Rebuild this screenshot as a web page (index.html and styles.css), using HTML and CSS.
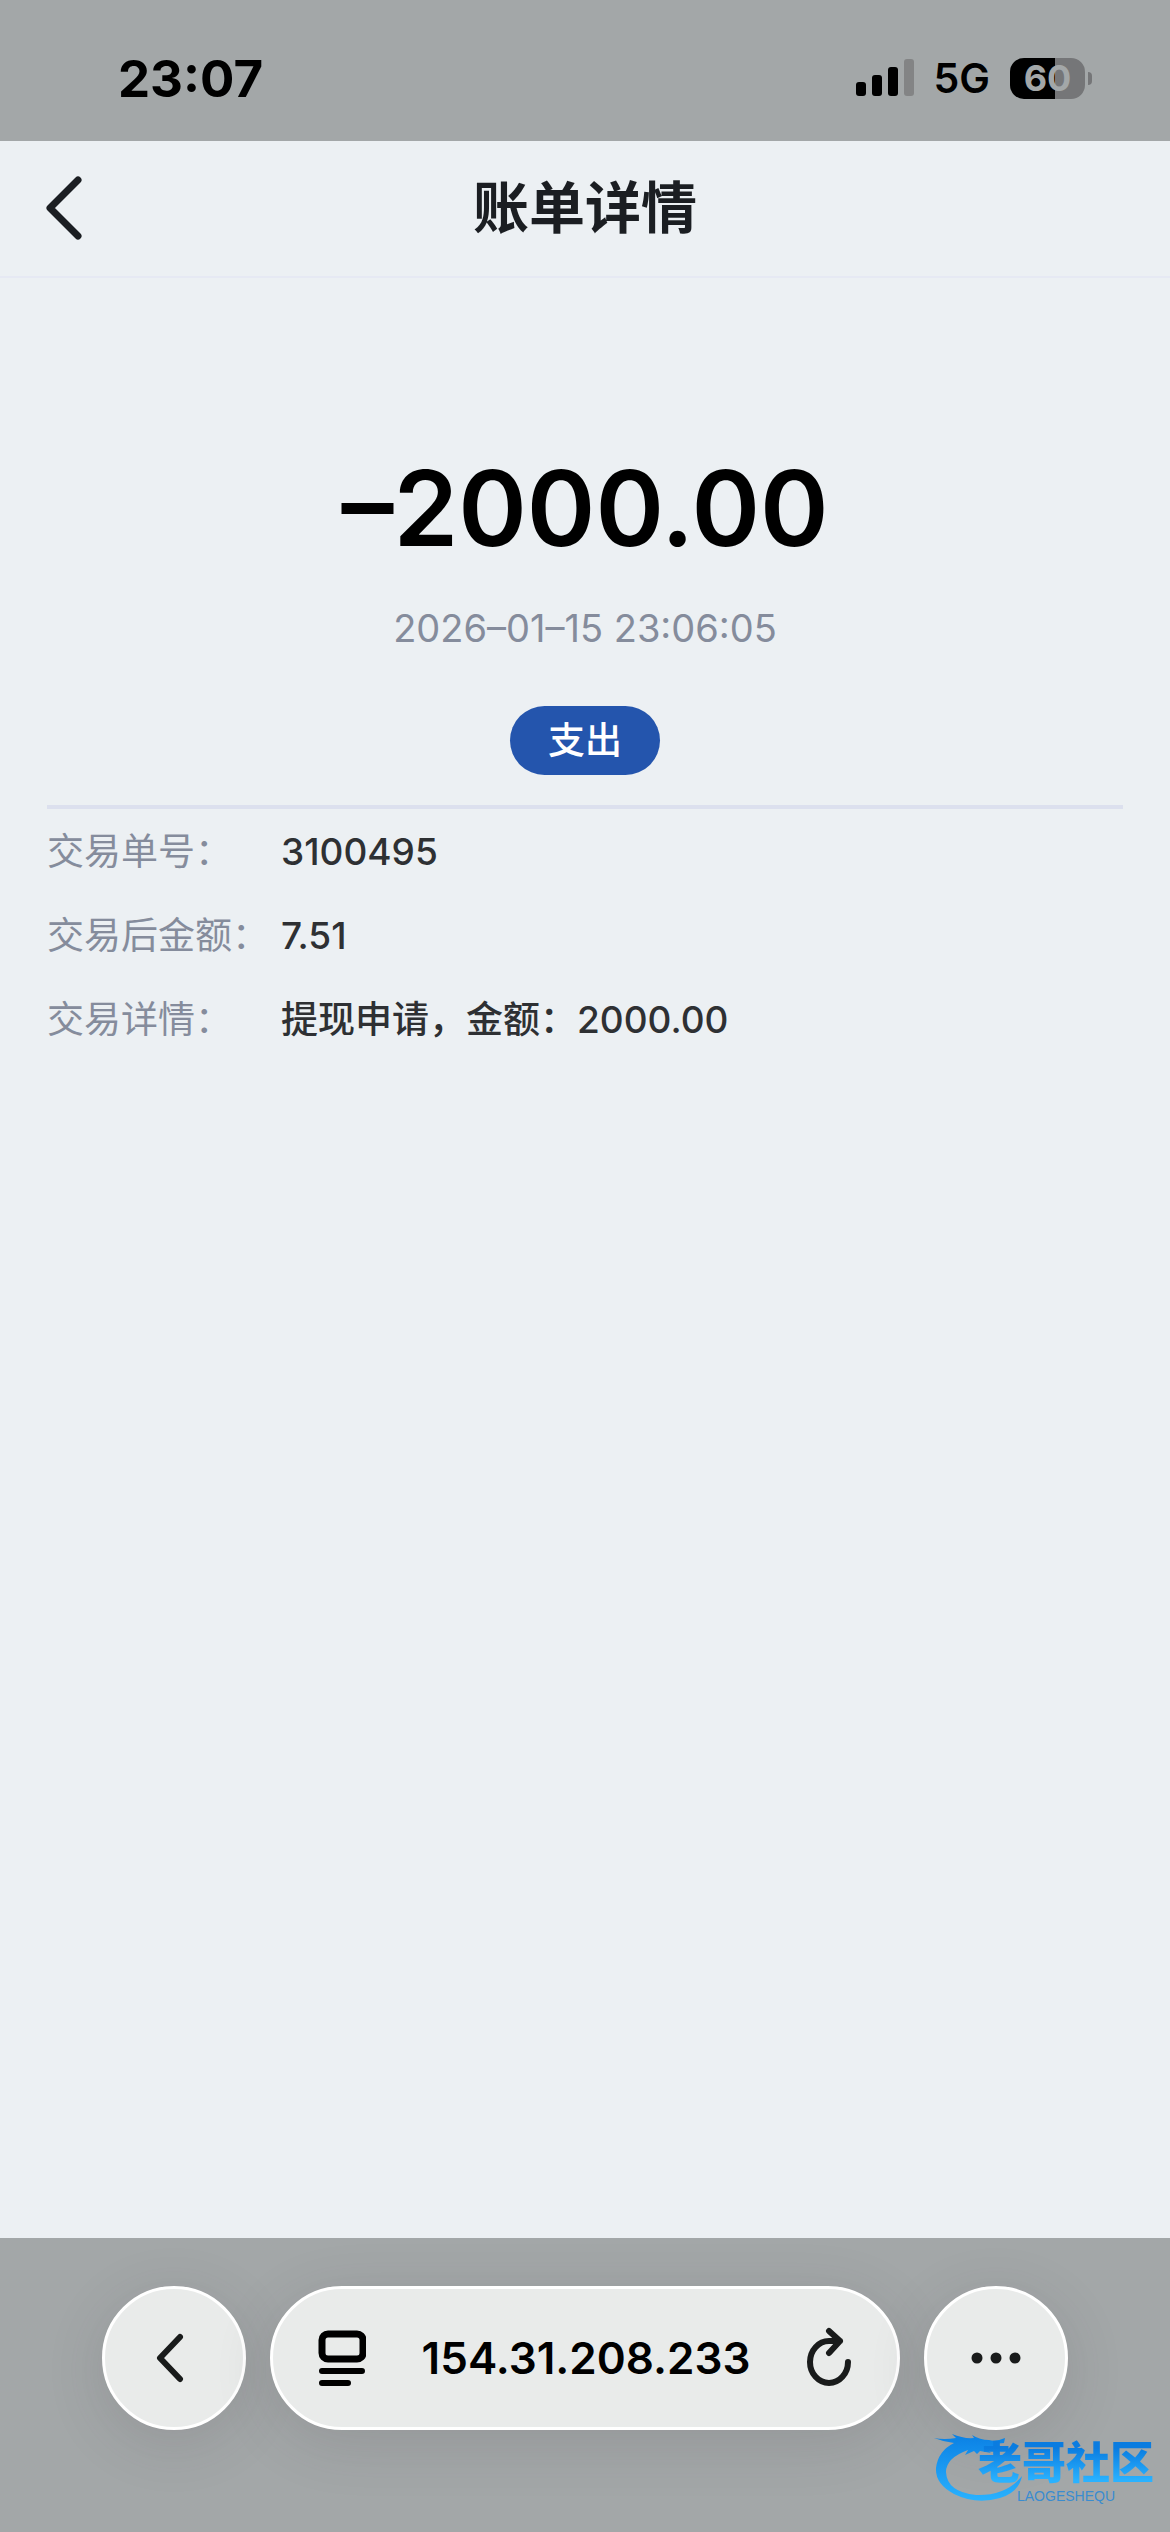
FILE: index.html
```html
<!DOCTYPE html>
<html lang="zh-CN">
<head>
    <meta charset="UTF-8">
    <meta name="viewport" content="width=device-width, initial-scale=1.0">
    <title>账单详情</title>
    <link rel="stylesheet" href="styles.css">
</head>
<body>
    <div class="status-bar">
        <span class="time">23:07</span>
        <div class="status-icons">
            <svg class="signal" width="58" height="38" viewBox="0 0 58 38" aria-hidden="true">
                <rect x="0" y="23" width="10" height="14" rx="3"/>
                <rect x="16" y="16" width="10" height="21" rx="3"/>
                <rect x="32" y="8" width="10" height="29" rx="3"/>
                <rect x="48" y="0" width="10" height="37" rx="3" fill="#838485"/>
            </svg>
            <span class="network">5G</span>
            <div class="battery"><span class="battery-level">60</span></div>
        </div>
    </div>

    <header class="header">
        <button class="back" aria-label="返回">
            <svg width="36" height="64" viewBox="0 0 36 64">
                <path d="M32 4 L4 32 L32 60" fill="none" stroke="#1b1e22" stroke-width="7" stroke-linecap="round" stroke-linejoin="round"/>
            </svg>
        </button>
        <h1>账单详情</h1>
    </header>

    <main class="content">
        <section class="summary">
            <div class="amount">–2000.00</div>
            <div class="date">2026–01–15 23:06:05</div>
            <span class="tag">支出</span>
        </section>
        <dl class="details">
            <dt>交易单号：</dt>
            <dd>3100495</dd>
            <dt>交易后金额：</dt>
            <dd>7.51</dd>
            <dt>交易详情：</dt>
            <dd>提现申请，金额：2000.00</dd>
        </dl>
    </main>

    <footer class="browser-bar">
        <button class="round-button" aria-label="后退">
            <svg width="36" height="50" viewBox="0 0 36 50">
                <path d="M24 4 L4 25 L24 46" fill="none" stroke="#191b1b" stroke-width="6" stroke-linecap="round" stroke-linejoin="round"/>
            </svg>
        </button>
        <div class="address-bar">
            <button class="bar-button" aria-label="页面菜单">
                <svg width="48" height="56" viewBox="0 0 48 56">
                    <rect x="4" y="4" width="41" height="25" rx="6" fill="none" stroke="#000" stroke-width="7"/>
                    <path d="M4 41 H44 M4 53 H30" stroke="#000" stroke-width="6" stroke-linecap="round"/>
                </svg>
            </button>
            <input class="address" type="text" value="154.31.208.233" aria-label="地址">
            <button class="bar-button" aria-label="刷新">
                <svg width="46" height="62" viewBox="0 0 46 62">
                    <path d="M42 35 A19 21 0 1 1 23 14 H34 M23 4 L34 14 L23 26" fill="none" stroke="#191b1b" stroke-width="6" stroke-linecap="round" stroke-linejoin="round"/>
                </svg>
            </button>
        </div>
        <button class="round-button" aria-label="更多">
            <svg width="50" height="12" viewBox="0 0 50 12" fill="#191b1b">
                <circle cx="6" cy="6" r="5.5"/>
                <circle cx="25" cy="6" r="5.5"/>
                <circle cx="44" cy="6" r="5.5"/>
            </svg>
        </button>

        <!-- community logo over the corner of the bar -->
        <div class="watermark">
            <svg class="dragon" width="90" height="70" viewBox="0 0 90 70" aria-hidden="true">
                <defs>
                    <linearGradient id="blue" x1="0" y1="0" x2="0" y2="1">
                        <stop offset="0" stop-color="#0a80e4"/>
                        <stop offset="1" stop-color="#2ab2ff"/>
                    </linearGradient>
                </defs>
                <path fill="url(#blue)" d="M0 4 Q10 6 22 4 L18 0 Q30 5 40 4 L38 1 Q46 6 55 6 Q62 8 71 4 L70 9 L60 10 L69 13 L68 17 Q58 14 52 15 L57 19 L46 17 L43 20 L40 17 L31 21 L34 16 Q12 24 12 38 Q13 58 42 61 Q72 62 88 42 Q85 58 66 64 Q42 71 20 60 Q1 50 2 34 Q4 17 20 9 Q10 8 0 4 Z"/>
            </svg>
            <div class="watermark-text">
                <span class="watermark-name">老哥社区</span>
                <span class="watermark-latin">LAOGESHEQU</span>
            </div>
        </div>
    </footer>
</body>
</html>
```
FILE: styles.css
```css
* {
    box-sizing: border-box;
}
body {
    display: flex;
    flex-direction: column;
    min-height: 100vh;
    margin: 0;
    background-color: #ecf0f3;
    font-family: Inter, "Noto Sans CJK SC", sans-serif;
    color: #000;
}
button {
    display: flex;
    justify-content: center;
    align-items: center;
    padding: 0;
    border: none;
    background: none;
    cursor: pointer;
}

/* Status bar */
.status-bar {
    display: flex;
    justify-content: space-between;
    align-items: center;
    height: 141px;
    padding: 15px 78px 0 118px;
    background-color: #a3a7a8;
}
.time {
    font-size: 51px;
    font-weight: 700;
}
.status-icons {
    display: flex;
    align-items: center;
    gap: 20px;
}
.network {
    font-size: 41px;
    font-weight: 600;
}
.battery {
    position: relative;
    margin-right: 7px;
}
.battery-level {
    display: block;
    width: 75px;
    height: 41px;
    border-radius: 14px;
    background: linear-gradient(to right, #000 60%, #757678 60%);
    color: #a3a7a8;
    font-size: 36px;
    font-weight: 700;
    line-height: 41px;
    text-align: center;
}
.battery::after {
    content: "";
    position: absolute;
    top: 14px;
    right: -7px;
    width: 4px;
    height: 13px;
    border-radius: 0 8px 8px 0;
    background-color: #757678;
}

/* Page header */
.header {
    display: grid;
    grid-template-columns: 36px 1fr 36px;
    align-items: center;
    height: 137px;
    padding: 0 46px 2px;
    border-bottom: 2px solid #e6e9f3;
}
.header h1 {
    margin: 0;
    color: #1b1e22;
    font-size: 56px;
    font-weight: 600;
    line-height: 80px;
    text-align: center;
}

/* Bill */
.content {
    flex: 1;
    padding: 160px 47px 0;
}
.summary {
    display: flex;
    flex-direction: column;
    align-items: center;
    padding-bottom: 30px;
    border-bottom: 4px solid #dce0ee;
}
.amount {
    font-size: 104px;
    font-weight: 600;
    line-height: 140px;
}
.date {
    margin-top: 20px;
    color: #858c9c;
    font-size: 38px;
    line-height: 60px;
}
.tag {
    margin-top: 48px;
    width: 150px;
    border-radius: 35px;
    background-color: #2455ad;
    color: #fff;
    font-size: 37px;
    font-weight: 500;
    line-height: 69px;
    text-align: center;
}
.details {
    display: grid;
    grid-template-columns: 234px 1fr;
    row-gap: 24px;
    margin: 13px 0 0;
    font-size: 37px;
    line-height: 60px;
}
.details dt {
    color: #858c9c;
}
.details dd {
    margin: 0;
    color: #2e3033;
    font-weight: 500;
}

/* Browser toolbar */
.browser-bar {
    position: relative;
    display: flex;
    gap: 24px;
    padding: 48px 102px 102px;
    background-color: #a3a7a8;
}
.round-button,
.address-bar {
    height: 144px;
    border: 3px solid #fff;
    border-radius: 72px;
    background-color: #e9ebea;
    box-shadow: 0 12px 60px rgba(60, 50, 60, 0.14);
}
.round-button {
    flex: none;
    width: 144px;
}
.address-bar {
    flex: 1;
    min-width: 0;
    display: flex;
    align-items: center;
    padding: 0 45px;
}
.bar-button {
    flex: none;
}
.address {
    flex: 1;
    min-width: 0;
    padding: 0;
    border: none;
    background: none;
    color: #000;
    font-family: inherit;
    font-size: 44px;
    font-weight: 600;
    text-align: center;
}

/* Watermark */
.watermark {
    position: absolute;
    right: 16px;
    bottom: 28px;
    display: flex;
    align-items: flex-end;
}
.dragon {
    margin-right: -46px;
}
.watermark-text {
    display: flex;
    flex-direction: column;
    align-items: center;
}
.watermark-name {
    background: linear-gradient(#0a7ce0 20%, #2ab2ff 85%);
    -webkit-background-clip: text;
    background-clip: text;
    color: transparent;
    font-size: 44px;
    font-weight: 900;
    line-height: 50px;
}
.watermark-latin {
    color: #3a8cd0;
    font-family: "Liberation Sans", sans-serif;
    font-size: 14px;
    line-height: 16px;
}
```
